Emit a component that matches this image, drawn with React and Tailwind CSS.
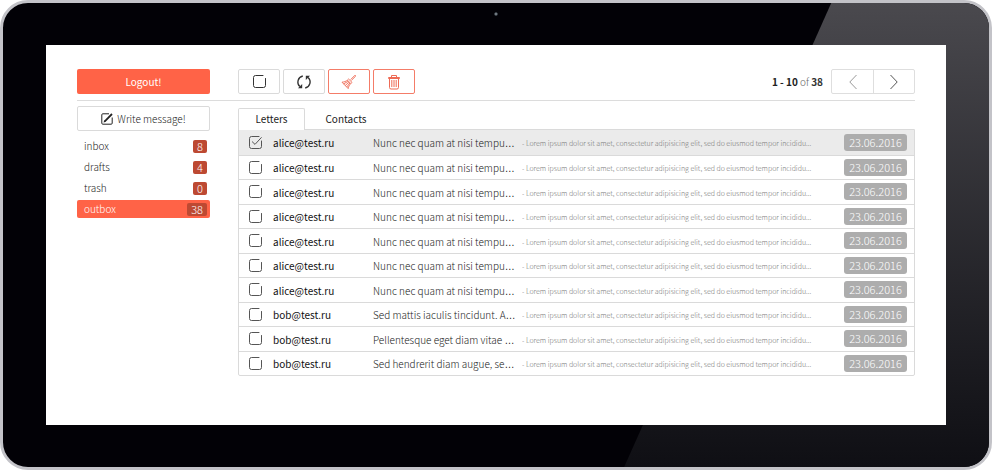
import { useState } from "react";

const FOLDERS = [
  { name: "inbox", count: 8 },
  { name: "drafts", count: 4 },
  { name: "trash", count: 0 },
  { name: "outbox", count: 38 },
];

const LOREM =
  "- Lorem ipsum dolor sit amet, consectetur adipisicing elit, sed do eiusmod tempor incididu...";

const LETTERS = [
  ...Array.from({ length: 7 }, () => ({ from: "alice@test.ru", subject: "Nunc nec quam at nisi tempu" })),
  { from: "bob@test.ru", subject: "Sed mattis iaculis tincidunt. A" },
  { from: "bob@test.ru", subject: "Pellentesque eget diam vitae " },
  { from: "bob@test.ru", subject: "Sed hendrerit diam augue, se" },
];

function Box({ checked, className }) {
  return (
    <svg viewBox="0 0 13 13" className={className} fill="none" stroke="currentColor" strokeLinecap="round">
      {checked ? (
        <>
          <path d="M10 .5H2.5A2 2 0 0 0 .5 2.5v8a2 2 0 0 0 2 2h8a2 2 0 0 0 2-2V5" />
          <path d="M3.3 5.8 6 8.4 12.3 1.6" />
        </>
      ) : (
        <path d="M10 .5H2.5A2 2 0 0 0 .5 2.5v8a2 2 0 0 0 2 2h8a2 2 0 0 0 2-2V3.500" />
      )}
    </svg>
  );
}

function Pencil() {
  return (
    <svg viewBox="0 0 12 12" className="size-3" fill="none" stroke="currentColor">
      <path d="M8 .8H1.8A1 1 0 0 0 .8 1.8v8.400a1 1 0 0 0 1 1h8.400a1 1 0 0 0 1-1V4.500" />
      <path d="M4 8.200 11 1" strokeWidth="1.800" />
      <path d="m2.500 9.600.8-2.600 1.800 1.800z" fill="currentColor" stroke="none" />
    </svg>
  );
}

function Refresh() {
  return (
    <svg viewBox="0 0 16 16" className="size-4" fill="none" stroke="currentColor" strokeWidth="1.4">
      <path d="M3.900 12.600A6.200 6.200 0 0 1 6.800 2" />
      <path d="M12.100 3.400a6.200 6.200 0 0 1-2.900 10.600" />
      <path d="M2 14.300h4.200v-4.200z" fill="currentColor" stroke="none" />
      <path d="M14 1.700H9.800v4.200z" fill="currentColor" stroke="none" />
    </svg>
  );
}

function Broom() {
  return (
    <svg viewBox="0 0 16 16" className="size-4" fill="none" stroke="currentColor" strokeWidth="0.9" strokeLinejoin="round">
      <path d="m9.600 5.600 4.400-4.400.8.8-4.400 4.400" />
      <path d="M7.600 5 11 8.400 9.800 9.600 6.400 6.200z" />
      <path d="M6.400 6.200C5 7.400 3 8 1 8.200l6.200 6.400c.2-2 1.200-3.600 2.600-5" />
      <path d="m2.600 9.900 4.600-2.600M4.200 11.500l3.900-3.300M5.700 13l3.200-4" />
    </svg>
  );
}

function Trash() {
  return (
    <svg viewBox="0 0 14 16" className="h-4 w-3.5" fill="none" stroke="currentColor">
      <path d="M1.500 3.500h11v1h-11zM4.500 3.500v-2h5v2" />
      <path d="M2.500 4.500v9a1.500 1.500 0 0 0 1.500 1.500h6a1.500 1.500 0 0 0 1.500-1.500v-9" />
      <path d="M4.800 6v7M7 6v7M9.200 6v7" />
    </svg>
  );
}

function Chevron({ d }) {
  return (
    <svg viewBox="0 0 8 16" className="h-4 w-2" fill="none" stroke="currentColor">
      <path d={d} />
    </svg>
  );
}

function ToolButton({ label, danger, children }) {
  return (
    <button
      type="button"
      aria-label={label}
      className={
        danger
          ? "flex h-[25px] w-[42px] items-center justify-center rounded-xs border border-[#f47c68] text-[#ee6a55]"
          : "flex h-[25px] w-[42px] items-center justify-center rounded-xs border border-[#dadada] text-[#333]"
      }
    >
      {children}
    </button>
  );
}

export default function App() {
  const [selected, setSelected] = useState(LETTERS.map((_, i) => i === 0));
  const toggle = (i) => setSelected((s) => s.map((v, j) => (j === i ? !v : v)));

  return (
    <div className="relative isolate flex min-h-screen overflow-hidden rounded-[28px] border-[3px] border-[#c3c3c8] bg-[#020106] font-['Noto_Sans_CJK_SC','Noto_Sans',sans-serif] text-[10px] leading-4 font-light text-[#222]">
      <div
        aria-hidden="true"
        className="absolute inset-0 -z-10 bg-linear-to-b from-[#4a494e] to-[#0f0f14] [clip-path:polygon(84%_0,100%_0,100%_100%,63%_100%)]"
      />
      <div
        aria-hidden="true"
        className="absolute inset-x-0 top-[9px] mx-auto size-1 rounded-full border border-[#33383f] bg-[#8a959c]"
      />

      <div className="mx-[43px] my-[42px] flex-1 bg-white px-[31px] py-6">
        <header className="flex gap-7 border-b border-[#dcdcdc] pb-1.5">
          <button type="button" className="h-[25px] w-[133px] rounded-xs bg-[#ff6347] font-normal text-white">
            Logout!
          </button>
          <div className="flex flex-1 items-center gap-[3px]">
            <ToolButton label="Select all">
              <Box className="size-[13px]" />
            </ToolButton>
            <ToolButton label="Refresh">
              <Refresh />
            </ToolButton>
            <ToolButton label="Clean" danger>
              <Broom />
            </ToolButton>
            <ToolButton label="Delete" danger>
              <Trash />
            </ToolButton>
            <p className="ml-auto pr-[5px] text-[#666]">
              <b className="font-bold text-[#222]">1 - 10</b> of <b className="font-bold text-[#333]">38</b>
            </p>
            <div className="flex h-[25px] rounded-xs border border-[#dedede]">
              <button type="button" aria-label="Previous page" className="flex w-[41px] items-center justify-center text-[#999]">
                <Chevron d="M7.500 1 .8 8l6.700 7" />
              </button>
              <button
                type="button"
                aria-label="Next page"
                className="flex w-[41px] items-center justify-center border-l border-[#dedede] text-[#555]"
              >
                <Chevron d="M.5 1l6.700 7-6.700 7" />
              </button>
            </div>
          </div>
        </header>

        <div className="flex gap-7 pt-[5px]">
          <aside className="w-[133px] shrink-0">
            <button
              type="button"
              className="flex h-[25px] w-full items-center justify-center gap-1 rounded-xs border border-[#dadada]"
            >
              <Pencil />
              Write message!
            </button>
            <nav className="flex flex-col gap-[3px] pt-1.5">
              {FOLDERS.map((f) => (
                <a
                  key={f.name}
                  href={"#" + f.name}
                  className={
                    f.name === "outbox"
                      ? "flex h-[18px] items-center justify-between rounded-xs bg-[#ff6347] pr-[3px] pl-[7px] text-white"
                      : "flex h-[18px] items-center justify-between pr-[3px] pl-[7px]"
                  }
                >
                  {f.name}
                  <span className="rounded-xs bg-[#bd4932] px-1 text-[11px] leading-[13px] text-white">{f.count}</span>
                </a>
              ))}
            </nav>
          </aside>

          <main className="min-w-0 flex-1 pt-0.5">
            <div role="tablist" className="flex h-[21px] font-normal text-[#222]">
              <button
                type="button"
                role="tab"
                aria-selected="true"
                className="-mb-px w-[67px] rounded-t-xs border border-b-0 border-[#dadada] bg-white pb-0.5"
              >
                Letters
              </button>
              <button type="button" role="tab" aria-selected="false" className="w-[82px]">
                Contacts
              </button>
            </div>
            <div className="rounded-b-xs border border-[#dadada]">
              <table className="w-full table-fixed">
                <colgroup>
                  <col className="w-[34px]" />
                  <col className="w-[100px]" />
                  <col className="w-[149px]" />
                  <col />
                  <col className="w-[70px]" />
                </colgroup>
                <tbody>
                  {LETTERS.map((l, i) => (
                    <tr
                      key={i}
                      className={
                        selected[i]
                          ? "border-b border-[#dadada] bg-[#ebebeb] last:border-0 odd:h-[25px] even:h-6"
                          : "border-b border-[#dadada] last:border-0 odd:h-[25px] even:h-6"
                      }
                    >
                      <td className="p-0 pl-2.5">
                        <label className="grid size-[13px] text-[#555]">
                          <input
                            type="checkbox"
                            aria-label={"Select letter " + (i + 1)}
                            checked={selected[i]}
                            onChange={() => toggle(i)}
                            className="size-full appearance-none [grid-area:1/1]"
                          />
                          <Box checked={selected[i]} className="pointer-events-none size-[13px] [grid-area:1/1]" />
                        </label>
                      </td>
                      <td className="p-0 pt-0.5 font-normal text-[#111]">{l.from}</td>
                      <td className="p-0 pt-0.5 whitespace-nowrap">
                        {l.subject}
                        <span className="font-['Liberation_Sans',sans-serif] leading-none">…</span>
                      </td>
                      <td className="truncate p-0 pt-0.5 text-[7px] text-[#777]">{LOREM}</td>
                      <td className="p-0">
                        <time className="block w-[63px] rounded-[3px] bg-[#adadad] text-center text-[11px] leading-[17px] text-white">
                          23.06.2016
                        </time>
                      </td>
                    </tr>
                  ))}
                </tbody>
              </table>
            </div>
          </main>
        </div>
      </div>
    </div>
  );
}
